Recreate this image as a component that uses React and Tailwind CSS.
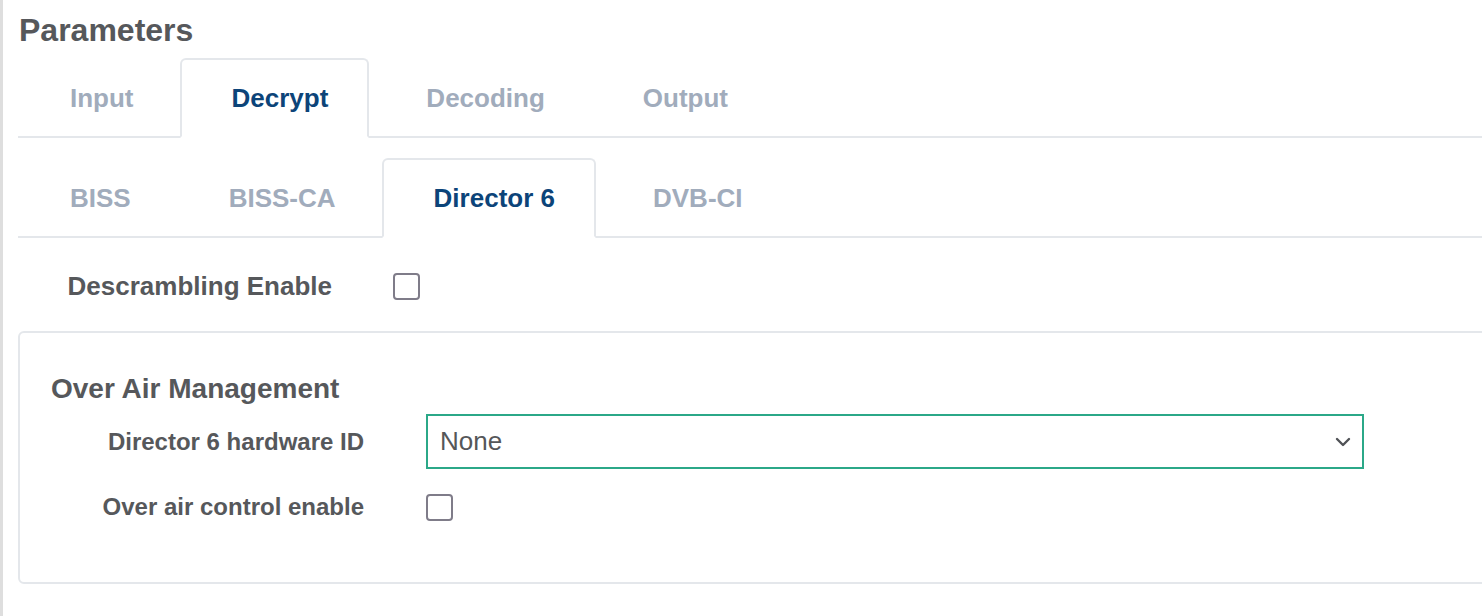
import React, { useState } from 'react';

const MAIN_TABS = ['Input', 'Decrypt', 'Decoding', 'Output'];
const SUB_TABS = ['BISS', 'BISS-CA', 'Director 6', 'DVB-CI'];

const TabBar = ({ tabs, active, onChange }) => (
  <ul className="flex border-b-2 border-[#e4e7eb]">
    {tabs.map(tab => (
      <li key={tab} className="-mb-[2px] mr-[5px]">
        <button
          onClick={() => onChange(tab)}
          className={
            tab === active
              ? 'h-[80px] flex items-center pl-[50px] pr-[39px] rounded-t-[6px] border-2 border-[#e4e7eb] border-b-white bg-white text-[26px] font-bold text-[#0c4479]'
              : 'h-[80px] flex items-center pl-[50px] pr-[39px] rounded-t-[6px] border-2 border-transparent text-[26px] font-bold text-[#a1acbc]'
          }
        >
          {tab}
        </button>
      </li>
    ))}
  </ul>
);

const Checkbox = ({ checked, onChange }) => (
  <button
    onClick={() => onChange(!checked)}
    className="w-[27px] h-[27px] rounded-[4px] border-2 border-[#7f7c89] bg-white flex items-center justify-center"
  >
    {checked && (
      <svg width="18" height="18" viewBox="0 0 24 24" fill="none" stroke="#0c4479" strokeWidth="3">
        <polyline points="4 12 10 18 20 6" />
      </svg>
    )}
  </button>
);

export default function App() {
  const [mainTab, setMainTab] = useState('Decrypt');
  const [subTab, setSubTab] = useState('Director 6');
  const [descramble, setDescramble] = useState(false);
  const [overAir, setOverAir] = useState(false);

  return (
    <div className="min-h-[616px] w-full overflow-hidden bg-white border-l-[3px] border-[#dedede] font-['Liberation_Sans',Arial,sans-serif] text-[#56585b]">
      <div className="pl-[15px]">
        <h1 className="pt-[10px] pl-[1px] text-[32px] leading-[40px] font-bold">Parameters</h1>

        <div className="mt-[8px]">
          <TabBar tabs={MAIN_TABS} active={mainTab} onChange={setMainTab} />
        </div>

        <div className="mt-[20px]">
          <TabBar tabs={SUB_TABS} active={subTab} onChange={setSubTab} />
        </div>

        <div className="mt-[16px] h-[64px] flex items-center">
          <span className="w-[314px] text-right text-[26px] font-bold">Descrambling Enable</span>
          <div className="ml-[61px]">
            <Checkbox checked={descramble} onChange={setDescramble} />
          </div>
        </div>

        <div className="mt-[13px] -mr-[20px] rounded-[6px] border-2 border-[#e4e7eb] pt-[38px] pb-[55px] pl-[31px]">
          <h2 className="text-[28px] leading-[36px] font-bold">Over Air Management</h2>

          <div className="mt-[7px] flex items-center">
            <span className="w-[313px] text-right text-[24px] font-bold">Director 6 hardware ID</span>
            <div className="ml-[62px] w-[938px] h-[55px] border-2 border-[#2ba888] flex items-center justify-between pl-[12px] pr-[11px]">
              <span className="text-[26px] text-[#555759]">None</span>
              <svg width="16" height="10" viewBox="0 0 16 10" fill="none" stroke="#505256" strokeWidth="2.4" strokeLinecap="round" strokeLinejoin="round">
                <polyline points="2 2 8 8 14 2" />
              </svg>
            </div>
          </div>

          <div className="mt-[18px] h-[40px] flex items-center">
            <span className="w-[313px] text-right text-[24px] font-bold">Over air control enable</span>
            <div className="ml-[62px]">
              <Checkbox checked={overAir} onChange={setOverAir} />
            </div>
          </div>
        </div>
      </div>
    </div>
  );
}
